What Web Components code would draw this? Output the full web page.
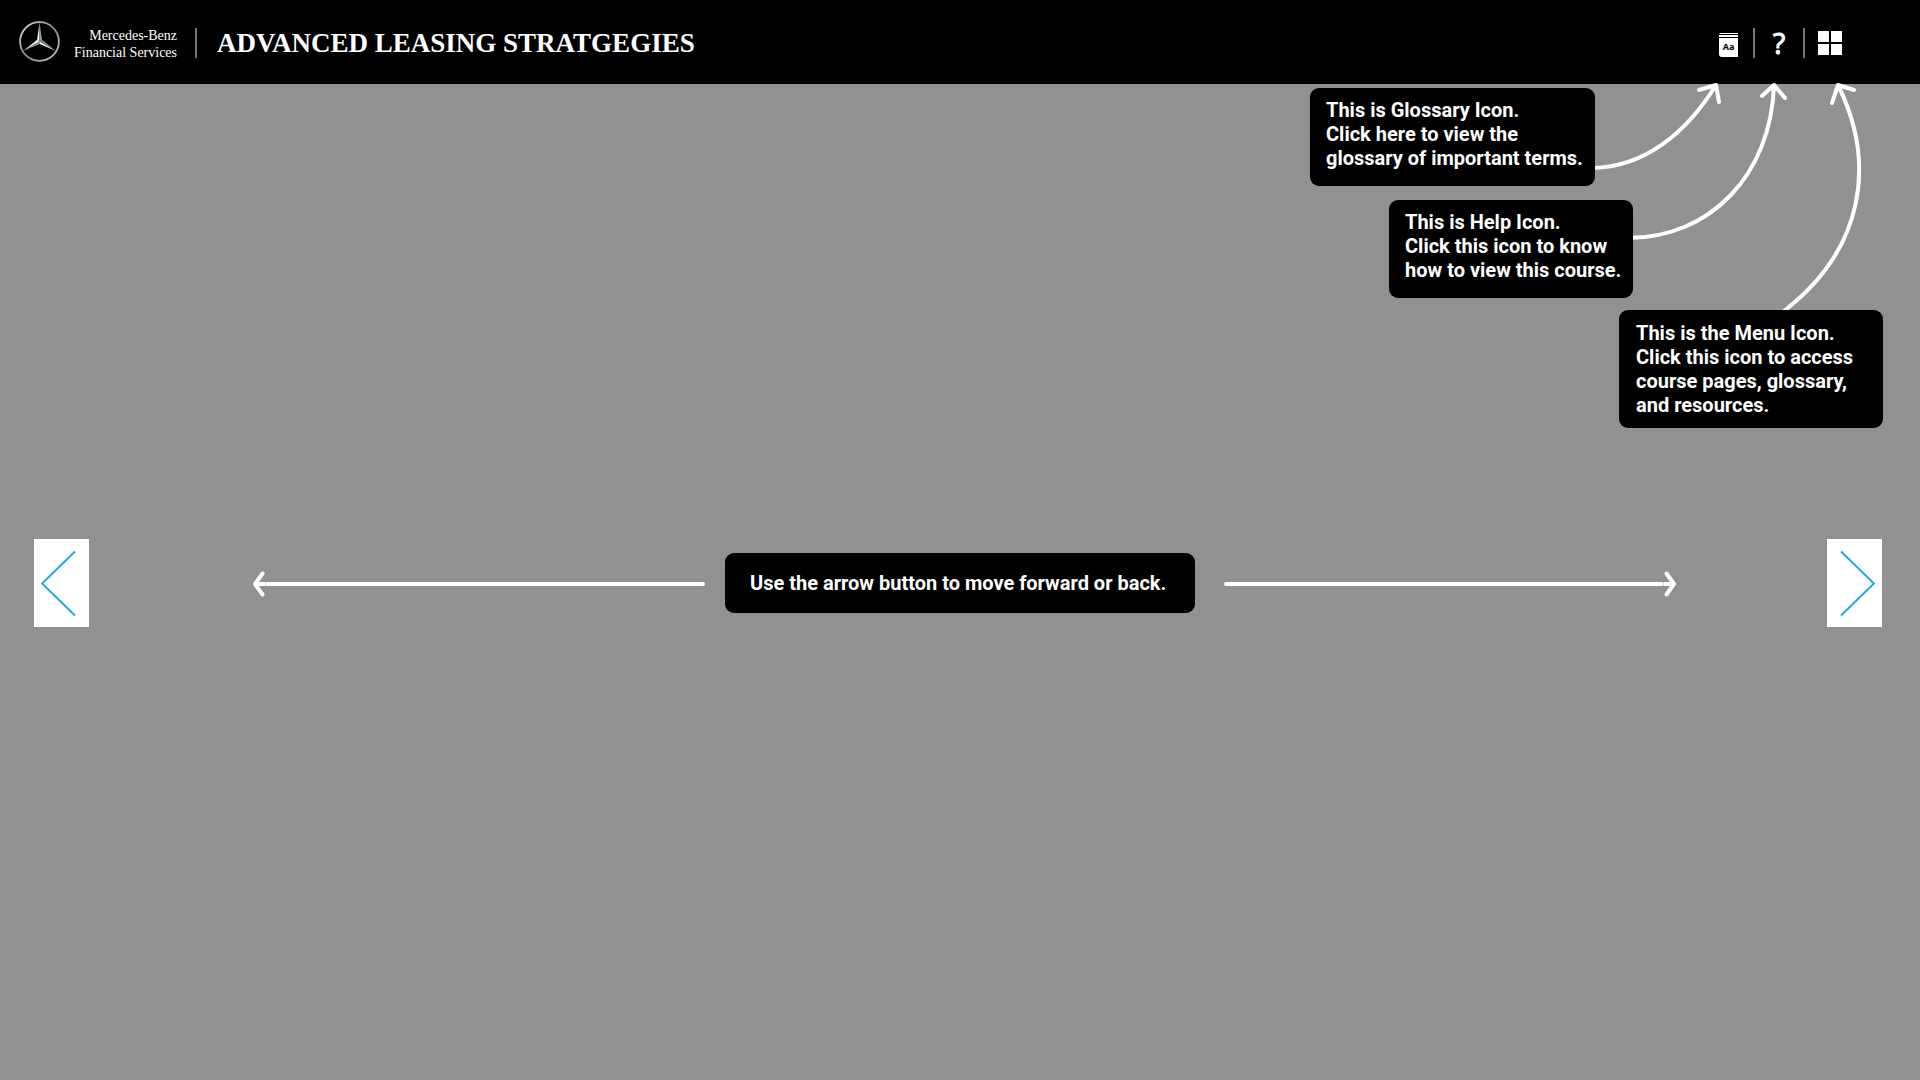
<!DOCTYPE html>
<html lang="en">
<head>
<meta charset="utf-8">
<title>Advanced Leasing Stratgegies</title>
<style>
  html, body { margin: 0; height: 100%; }
  body { background: #919191; color: #fff; font-family: "Liberation Sans", sans-serif; }
</style>
</head>
<body>
<course-page></course-page>
<script>
const define = (name, html) => {
  const template = document.createElement('template');
  template.innerHTML = html;
  customElements.define(name, class extends HTMLElement {
    constructor() {
      super();
      this.attachShadow({ mode: 'open' }).append(template.content.cloneNode(true));
    }
  });
};

define('brand-mark', `
<style>
  :host { display: flex; align-items: center; gap: 14px; font: 14px/17px "Liberation Serif", serif; text-align: right; }
  svg { display: block; flex: none; overflow: visible; }
  div { padding-top: 2px; }
</style>
<svg width="42" height="42" viewBox="0 0 42 42" role="img" aria-label="Three-pointed star">
  <defs><linearGradient id="ring" x1="0" y1="0" x2="1" y2="1">
    <stop offset="0" stop-color="#e4e8ea"/><stop offset=".5" stop-color="#7f8a90"/><stop offset="1" stop-color="#c9d0d3"/>
  </linearGradient></defs>
  <circle cx="21.5" cy="19.5" r="19.4" fill="none" stroke="url(#ring)" stroke-width="1.8"/>
  <g transform="translate(.5 -1.5)">
  <path d="M21 2 L18.6 19.2 L21 21 Z" fill="#f5f7f8"/><path d="M21 2 L23.6 19.2 L21 21 Z" fill="#8f999e"/>
  <path d="M4.6 30.5 L18.6 19.2 L21 21 Z" fill="#e6eaec"/><path d="M4.6 30.5 L21 23.4 L21 21 Z" fill="#8d979c"/>
  <path d="M37.4 30.5 L23.6 19.2 L21 21 Z" fill="#7d878c"/><path d="M37.4 30.5 L21 23.4 L21 21 Z" fill="#f0f3f4"/>
  </g>
</svg>
<div><slot></slot></div>`);

define('bar-divider', `
<style>:host { display: block; flex: none; width: 2px; height: 30px; background: #777; }</style>`);

define('icon-button', `
<style>
  :host { display: block; flex: none; }
  button { display: flex; align-items: center; justify-content: center; margin: 0; padding: 0; border: 0;
    background: none; color: inherit; font: inherit; cursor: pointer; }
</style>
<button type="button"><slot></slot></button>`);

define('course-header', `
<style>
  :host { display: block; background: #000; }
  header { display: flex; align-items: center; justify-content: space-between; box-sizing: border-box; height: 84px; padding: 2px 78px 0 18px; }
  .left, .tools { display: flex; align-items: center; }
  .left { gap: 18px; }
  .tools { gap: 13px; }
  h1 { margin: 0; padding-left: 2px; font: bold 27px/34px "Liberation Serif", serif; white-space: nowrap; }
  svg { display: block; }
  .glyph { width: 22px; font: 500 29px/30px "Open Sans", sans-serif; text-align: center; -webkit-text-stroke: 1px #fff; }
</style>
<header>
  <div class="left">
    <brand-mark>Mercedes-Benz<br>Financial Services</brand-mark>
    <bar-divider></bar-divider>
    <h1>ADVANCED LEASING STRATGEGIES</h1>
  </div>
  <div class="tools">
    <icon-button>
      <svg width="21" height="28" viewBox="0 -4 21 28" aria-label="Glossary">
        <path d="M1 0H19V1H0ZM0 2H19V4H0Z" fill="#fff"/>
        <path d="M0 5H19V24H3Q0 24 0 21Z" fill="#fff"/>
        <text x="9.5" y="17" text-anchor="middle" font-family="Noto Sans, sans-serif" font-weight="700" font-size="9" fill="#000">Aa</text>
      </svg>
    </icon-button>
    <bar-divider></bar-divider>
    <icon-button><span class="glyph">?</span></icon-button>
    <bar-divider></bar-divider>
    <icon-button>
      <svg width="24" height="24" viewBox="0 0 24 24" aria-label="Menu">
        <path d="M0 0H11V11H0ZM13 0H24V11H13ZM0 13H11V24H0ZM13 13H24V24H13Z" fill="#fff"/>
      </svg>
    </icon-button>
  </div>
</header>`);

define('help-callout', `
<style>
  :host { display: block; box-sizing: border-box; padding: 10px 16px 16px; border-radius: 9px; background: #000;
    color: #fff; font: bold 20px/24px Roboto, sans-serif; white-space: nowrap; }
</style>
<slot></slot>`);

define('page-button', `
<style>
  :host { display: block; flex: none; }
  button { display: block; margin: 0; padding: 0; border: 0; background: #fff; cursor: pointer; }
  svg { display: block; }
  :host([forward]) svg { transform: scaleX(-1); }
</style>
<button type="button" aria-label="Turn page">
  <svg width="55" height="88" viewBox="0 0 55 88"><path d="M41 12.5L8 44.5L41 76.5" fill="none" stroke="#19a5e6" stroke-width="1.8"/></svg>
</button>`);

define('long-arrow', `
<style>
  :host { display: flex; align-items: center; flex: 1; }
  :host([forward]) { flex-direction: row-reverse; }
  :host([forward]) svg { transform: scaleX(-1); }
  svg { display: block; flex: none; }
  .shaft { flex: 1; height: 4px; border-radius: 2px; background: #fff; }
</style>
<svg width="12" height="26" viewBox="0 0 12 26" aria-hidden="true">
  <path d="M9.5 2.5L2 13L9.5 23.5M2 13H12" fill="none" stroke="#fff" stroke-width="4" stroke-linecap="round" stroke-linejoin="round"/>
</svg>
<div class="shaft"></div>`);

define('page-turner', `
<style>
  :host { display: flex; align-items: center; padding: 0 38px 0 34px; }
  .back { margin: 2px 20px 0 164px; }
  .next { margin: 2px 151px 0 29px; }
  help-callout { width: 470px; padding: 18px 25px; }
</style>
<page-button></page-button>
<long-arrow class="back"></long-arrow>
<help-callout>Use the arrow button to move forward or back.</help-callout>
<long-arrow class="next" forward></long-arrow>
<page-button forward></page-button>`);

define('icon-guide', `
<style>
  :host { position: absolute; top: 0; right: 0; width: 620px; height: 350px; }
  svg, help-callout { position: absolute; }
  svg { top: -14px; right: 0; }
  .glossary { top: 4px; right: 325px; width: 285px; }
  .help { top: 116px; right: 287px; width: 244px; }
  .menu { top: 226px; right: 37px; width: 264px; padding: 11px 17px; }
</style>
<svg width="620" height="260" viewBox="1300 70 620 260" fill="none" stroke="#fff" stroke-width="4" stroke-linecap="round" stroke-linejoin="round" aria-hidden="true">
  <path d="M1590 168C1645 168 1687 132 1716 85M1699 90L1716 85L1719 102"/>
  <path d="M1628 238C1710 238 1771 175 1774 85M1762 96L1774 85L1785 98"/>
  <path d="M1780 314C1866 250 1876 162 1838 85M1832 103L1838 85L1854 90"/>
</svg>
<help-callout class="glossary">This is Glossary Icon.<br>Click here to view the<br>glossary of important terms.</help-callout>
<help-callout class="help">This is Help Icon.<br>Click this icon to know<br>how to view this course.</help-callout>
<help-callout class="menu">This is the Menu Icon.<br>Click this icon to access<br>course pages, glossary,<br>and resources.</help-callout>`);

define('course-page', `
<style>
  :host { display: flex; flex-direction: column; min-height: 100vh; }
  main { position: relative; flex: 1; display: flex; align-items: center; padding-top: 2px; }
  page-turner { flex: 1; }
</style>
<course-header></course-header>
<main>
  <page-turner></page-turner>
  <icon-guide></icon-guide>
</main>`);
</script>
</body>
</html>
